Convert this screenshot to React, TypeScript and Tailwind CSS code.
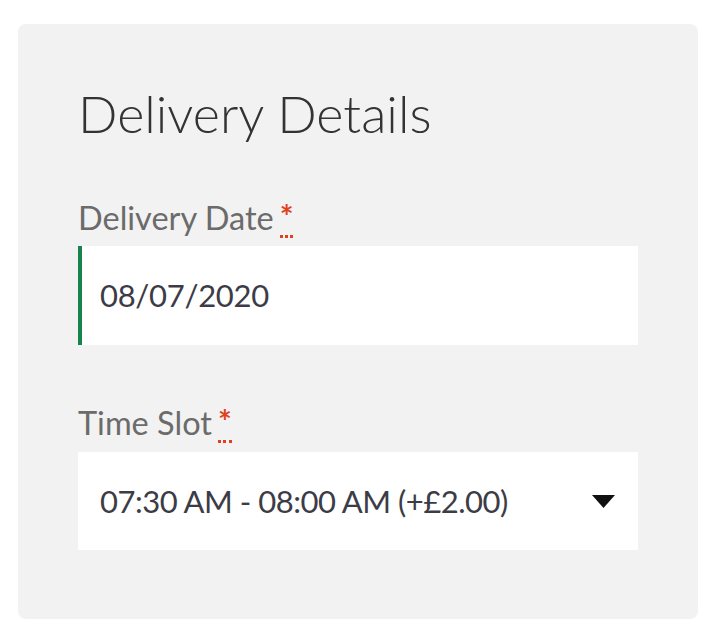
import React from "react";

function Req() {
  return (
    <abbr
      title="required"
      className="ml-[6px] text-[#e2401c] border-b-[3px] border-dotted border-[#e2401c] leading-none inline-block pb-[2px] font-bold"
      style={{ textDecoration: "none" }}
    >
      *
    </abbr>
  );
}

export default function App() {
  const font = { fontFamily: "Lato, 'Noto Sans', sans-serif" };
  return (
    <div className="w-[720px] h-[642px] bg-white pt-[24px] pl-[18px]" style={font}>
      <div className="w-[680px] h-[595px] bg-[#f2f2f2] rounded-[8px] px-[60px] pt-[80px] flex flex-col">
        <h2 className="text-[52px] font-light text-[#333333] leading-[60px] -mt-[21px]">
          Delivery Details
        </h2>
        <label className="mt-[55px] text-[32.5px] text-[#6b6b6b] leading-[40px] flex items-end">
          Delivery Date
          <Req />
        </label>
        <div className="mt-[8px] h-[99px] bg-white border-l-4 border-[#16834f] pl-[18px] flex items-center text-[31px] tracking-[-0.3px] text-[#3c3c46]">
          08/07/2020
        </div>
        <label className="mt-[58px] text-[32.5px] text-[#6b6b6b] leading-[40px] flex items-end">
          Time Slot
          <Req />
        </label>
        <div className="mt-[9px] h-[98px] bg-white pl-[22px] pr-[23px] flex items-center justify-between text-[31px] tracking-[-0.5px] text-[#3c3c46]">
          <span>07:30 AM - 08:00 AM (+£2.00)</span>
          <svg width="23" height="13" viewBox="0 0 23 13">
            <path d="M0 0 L23 0 L11.5 13 Z" fill="#111111" />
          </svg>
        </div>
      </div>
    </div>
  );
}
